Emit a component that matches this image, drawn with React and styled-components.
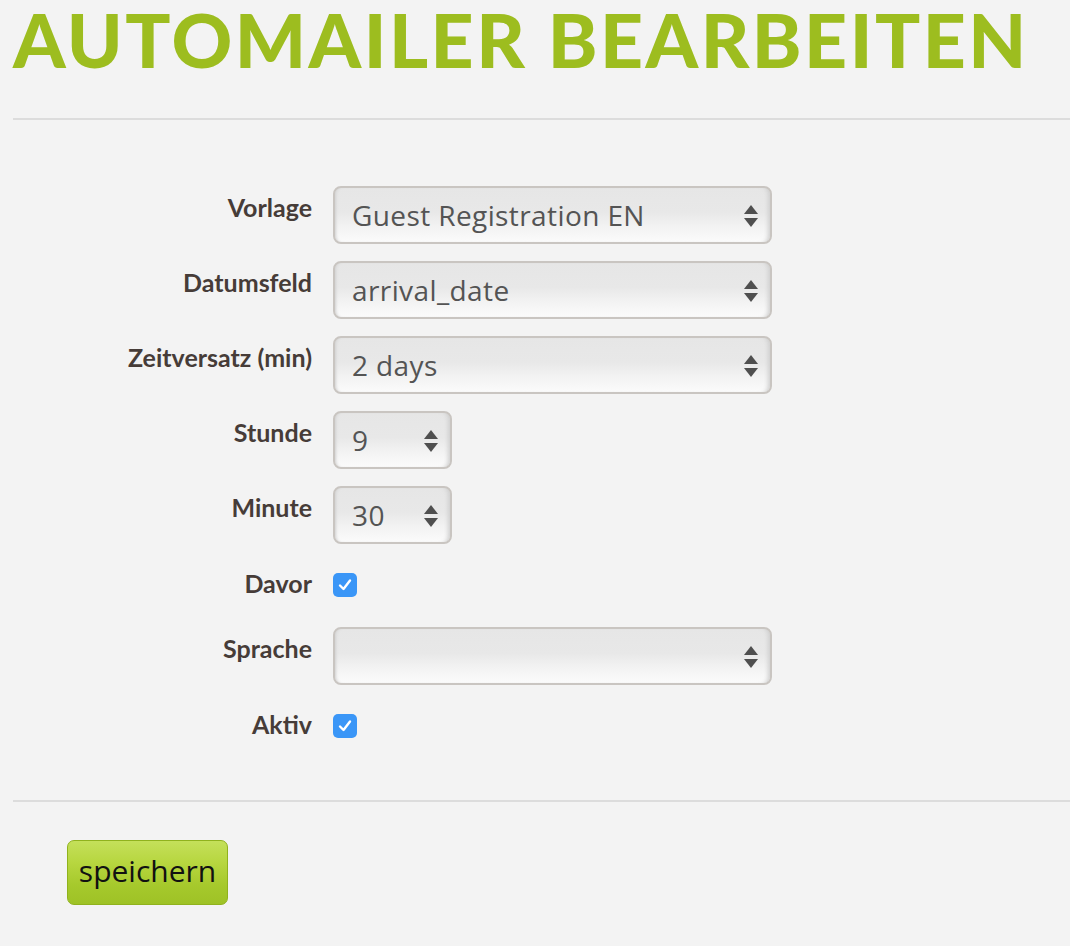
import React from "react";
import styled, { createGlobalStyle } from "styled-components";

const GlobalStyle = createGlobalStyle`
  html, body {
    margin: 0;
    padding: 0;
    background: #f3f3f3;
  }
`;

const Page = styled.div`
  width: 1070px;
  min-height: 946px;
  background: #f3f3f3;
  padding-left: 13px;
  box-sizing: border-box;
  font-family: Lato, "Noto Sans", sans-serif;
  overflow: hidden;
`;

const Title = styled.h1`
  margin: -6px 0 0;
  height: 124px;
  box-sizing: border-box;
  font-family: Lato, sans-serif;
  font-weight: 900;
  font-size: 75px;
  line-height: normal;
  letter-spacing: 2.5px;
  color: #9dbd1f;
  white-space: nowrap;
`;

const Rule = styled.hr`
  margin: 0;
  border: 0;
  height: 2px;
  background: #dcdcdc;
`;

const Form = styled.div`
  display: grid;
  grid-template-columns: 299px auto;
  column-gap: 21px;
  row-gap: 17px;
  padding: 66px 0 49px;
`;

const Label = styled.div`
  text-align: right;
  font-family: Lato, sans-serif;
  font-weight: 700;
  font-size: 25px;
  line-height: 30px;
  padding-top: ${(p) => (p.$check ? 7 : 6)}px;
  color: #463c38;
  white-space: nowrap;
`;

const SelectBox = styled.div`
  position: relative;
  width: ${(p) => p.$width}px;
  height: 58px;
  box-sizing: border-box;
  border: 2px solid #c9c5c1;
  border-radius: 8px;
  background: linear-gradient(#e6e6e6 0%, #e8e8e8 45%, #f2f2f2 70%, #fbfbfb 100%);
  box-shadow: inset 3px 0 3px -2px #d0d0d0, inset -5px 0 4px -3px #cfcfcf;
  display: flex;
  align-items: center;
  padding-left: 17px;
  padding-bottom: 1px;
  font-family: "Open Sans", sans-serif;
  font-size: 28px;
  letter-spacing: 0.4px;
  color: #545454;
`;

const Arrows = styled.svg`
  position: absolute;
  right: 12px;
  top: 17px;
`;

const Check = styled.div`
  width: 24px;
  height: 24px;
  margin-top: 12px;
  margin-bottom: 13px;
  border-radius: 5px;
  background: #3a96f7;
  display: flex;
  align-items: center;
  justify-content: center;
`;

const Footer = styled.div`
  padding: 38px 0 0 54px;
`;

const SaveButton = styled.button`
  width: 161px;
  height: 65px;
  border: 1px solid #90b21d;
  border-radius: 7px;
  background: linear-gradient(#c4e05a 0%, #b7d63f 35%, #a6c92c 70%, #9ec226 100%);
  font-family: "Open Sans", sans-serif;
  font-size: 30px;
  color: #111;
  padding: 0 0 4px;
  cursor: pointer;
`;

function Select({ value, width = 439 }) {
  return (
    <SelectBox $width={width}>
      {value}
      <Arrows width="14" height="22" viewBox="0 0 14 22">
        <path d="M7 0 L14 9 L0 9 Z" fill="#4f4f4f" />
        <path d="M0 13 L14 13 L7 22 Z" fill="#4f4f4f" />
      </Arrows>
    </SelectBox>
  );
}

function Checkbox() {
  return (
    <Check>
      <svg width="18" height="18" viewBox="0 0 18 18">
        <path d="M4 9.5 L7.5 13 L14 4.5" fill="none" stroke="#fff" strokeWidth="2.4" strokeLinecap="round" strokeLinejoin="round" />
      </svg>
    </Check>
  );
}

export default function App() {
  return (
    <Page>
      <GlobalStyle />
      <Title>AUTOMAILER BEARBEITEN</Title>
      <Rule />
      <Form>
        <Label>Vorlage</Label>
        <Select value="Guest Registration EN" />
        <Label>Datumsfeld</Label>
        <Select value="arrival_date" />
        <Label>Zeitversatz (min)</Label>
        <Select value="2 days" />
        <Label>Stunde</Label>
        <Select value="9" width={119} />
        <Label>Minute</Label>
        <Select value="30" width={119} />
        <Label $check>Davor</Label>
        <Checkbox />
        <Label>Sprache</Label>
        <Select value="" />
        <Label $check>Aktiv</Label>
        <Checkbox />
      </Form>
      <Rule />
      <Footer>
        <SaveButton>speichern</SaveButton>
      </Footer>
    </Page>
  );
}
